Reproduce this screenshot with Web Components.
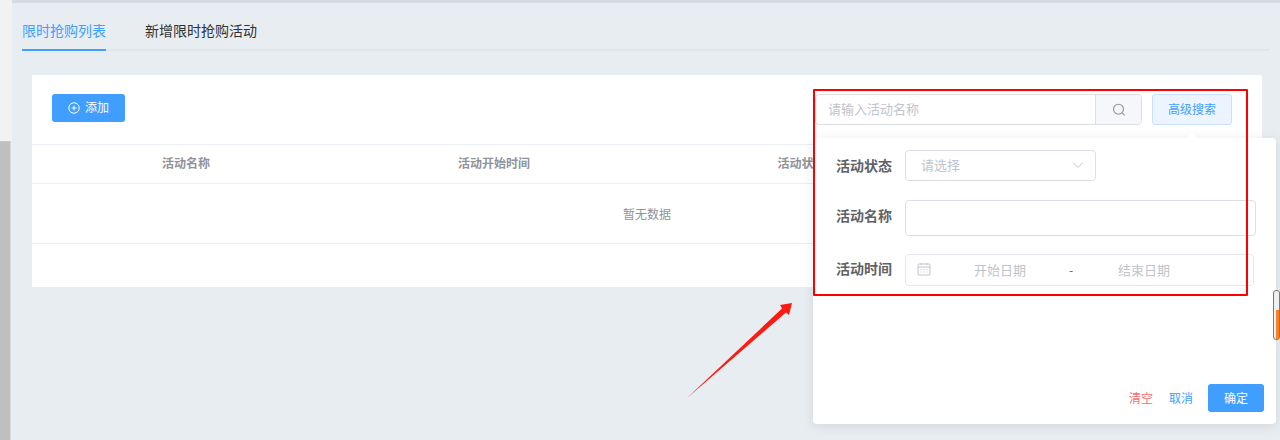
<!DOCTYPE html>
<html lang="zh"><head><meta charset="utf-8"><title>限时抢购</title>
<style>
html,body{margin:0;height:440px;overflow:hidden;background:#e8edf1;font-family:"Noto Sans CJK SC","Liberation Sans",sans-serif;color:#303133}
</style></head><body>
<app-shell>
  <tab-bar></tab-bar>
  <list-card>
    <flash-table></flash-table>
  </list-card>
</app-shell>
<script>
function def(name,html){customElements.define(name,class extends HTMLElement{constructor(){super();this.attachShadow({mode:'open'}).innerHTML=html;}});}
const chevron='<svg width="14" height="14" viewBox="0 0 14 14" fill="none" stroke="#c0c4cc" stroke-width="1" style="margin-top:1px"><path d="M2 4.5 7 9.5l5-5"/></svg>';
def('app-shell',`<style>
:host{display:flex;width:1280px;height:440px;position:relative;overflow:hidden}
.rail{width:12px;flex:none;display:flex;flex-direction:column}
.rail .a{height:141px;background:#f2f2f2}
.rail .b{flex:1;background:#bfbfbf;border-top:1px solid #c9c9c9;border-right:1px solid #d6d8da;margin-right:1px}
.main{flex:1;min-width:0;display:flex;flex-direction:column}
.top{height:3px;background:#d7dbe1;flex:none}
.body{padding:19px 18px 0 10px;display:flex;flex-direction:column}
</style>
<div class="rail"><div class="a"></div><div class="b"></div></div>
<div class="main"><div class="top"></div><div class="body"><slot></slot></div></div>
<adv-popover></adv-popover><red-notes></red-notes><mini-scroll></mini-scroll>`);
def('tab-bar',`<style>
:host{display:flex;gap:39px;height:29px;box-sizing:border-box;border-bottom:2px solid #e2e6eb;font-size:14px;line-height:17px;margin-right:-8px}
.t{height:29px;box-sizing:border-box;color:#303133}
.on{color:#409eff;border-bottom:2px solid #409eff;width:84px}
</style><div class="t on">限时抢购列表</div><div class="t">新增限时抢购活动</div>`);
def('list-card',`<style>
:host{display:block;background:#fff;margin:24px 0 0 10px;height:212px}
.bar{height:69px;box-sizing:border-box;padding:19px 20px 0;display:flex;align-items:flex-start;justify-content:space-between}
.add{width:73px;height:28px;box-sizing:border-box;padding-bottom:3px;background:#409eff;border-radius:3px;color:#fff;font-size:12px;display:flex;align-items:center;justify-content:center;gap:5px}
.add svg{margin-top:3px}
</style>
<div class="bar"><div class="add"><svg width="12" height="12" viewBox="0 0 12 12" fill="none" stroke="#fff" stroke-width="1"><circle cx="6" cy="6" r="5.2"/><path d="M6 3.5v5M3.5 6h5"/></svg>添加</div><search-bar></search-bar></div>
<slot></slot>`);
def('search-bar',`<style>
:host{display:flex;gap:10px;margin-right:10px}
.box{width:327px;height:31px;box-sizing:border-box;border:1px solid #dcdfe6;border-radius:4px;display:flex;font-size:13px;color:#c0c4cc;line-height:28px;overflow:hidden}
.ph{flex:1;padding-left:12px}
.ic{width:45px;background:#f5f7fa;border-left:1px solid #dcdfe6;display:flex;align-items:center;justify-content:center}
.adv{width:80px;height:31px;box-sizing:border-box;padding-bottom:2px;border:1px solid #c6e2ff;background:#ecf5ff;color:#409eff;border-radius:3px;font-size:12px;display:flex;align-items:center;justify-content:center}
</style>
<div class="box"><div class="ph">请输入活动名称</div><div class="ic"><svg width="14" height="14" viewBox="0 0 14 14" fill="none" stroke="#909399" stroke-width="1.1"><circle cx="6.5" cy="6.2" r="5"/><path d="M10.2 9.9 12.6 12.4"/></svg></div></div>
<div class="adv">高级搜索</div>`);
def('flash-table',`<style>
:host{display:block;font-size:12px;color:#909399}
.h{display:grid;grid-template-columns:308px 308px 307px 307px;height:40px;box-sizing:border-box;border-top:1px solid #ebeef5;border-bottom:1px solid #ebeef5;font-weight:700;line-height:36px;text-align:center}
.e{height:60px;box-sizing:border-box;border-bottom:1px solid #ebeef5;line-height:59px;text-align:center}
</style>
<div class="h"><div>活动名称</div><div>活动开始时间</div><div>活动状态</div><div></div></div>
<div class="e">暂无数据</div>`);
def('adv-popover',`<style>
:host{position:absolute;left:813px;top:138px;width:463px;height:286px;background:#fff;border-radius:4px;box-shadow:0 2px 12px rgba(0,0,0,.1);box-sizing:border-box;padding:12px 12px 12px 23px;display:flex;flex-direction:column;font-size:13px}
.arrow{position:absolute;left:374px;top:-5px;width:0;height:0;border:5px solid transparent;border-top:0;border-bottom:5px solid #fff}
.row{display:flex;align-items:center}
label{width:69px;flex:none;font-size:14px;font-weight:700;color:#606266}
.f{box-sizing:border-box;border:1px solid #dcdfe6;border-radius:4px;color:#c0c4cc;display:flex;align-items:center}
.sel{width:191px;height:31px;padding:0 10px 2px 15px;justify-content:space-between}
.inp{width:351px;height:36px}
.date{width:349px;height:32px;padding:0 0 2px 11px;border-color:#e4e7ed}
.date span{text-align:center;width:52px;font-size:13px;flex:none}
.date i{font-style:normal;color:#606266;font-size:12px;width:14px;text-align:center;flex:none}
.date svg{flex:none;margin-top:-1px}
.foot{margin-top:auto;display:flex;align-items:center;justify-content:flex-end;font-size:12px}
.clr{color:#f56c6c;margin:0 16px 2px 0}.can{color:#409eff;margin:0 15px 2px 0}
.ok{width:56px;height:28px;box-sizing:border-box;padding-bottom:2px;background:#409eff;color:#fff;border-radius:3px;display:flex;align-items:center;justify-content:center}
</style>
<div class="arrow"></div>
<div class="row"><label style="padding-bottom:2px">活动状态</label><div class="f sel">请选择${chevron}</div></div>
<div class="row" style="margin-top:19px"><label style="padding-bottom:6px">活动名称</label><div class="f inp"></div></div>
<div class="row" style="margin-top:18px"><label style="padding-bottom:4px">活动时间</label><div class="f date"><svg width="14" height="14" viewBox="0 0 14 14" fill="none" stroke="#c0c4cc" stroke-width="1"><rect x="1" y="2" width="12" height="11" rx="1"/><path d="M1 5h12M4 1v2M10 1v2M3.5 7.5h1M6.5 7.5h1M9.5 7.5h1M3.5 10h1M6.5 10h1M9.5 10h1"/></svg><span style="margin-left:43px">开始日期</span><i style="margin-left:38px">-</i><span style="margin-left:40px">结束日期</span></div></div>
<div class="foot"><span class="clr">清空</span><span class="can">取消</span><div class="ok">确定</div></div>`);
def('red-notes',`<style>
:host{position:absolute;inset:0;pointer-events:none;display:block}
.r{position:absolute;left:813px;top:89px;width:435px;height:207px;box-sizing:border-box;border:2px solid #ff0000;border-radius:1px}
svg{position:absolute;left:680px;top:295px}
</style><div class="r"></div>
<svg width="120" height="110" viewBox="0 0 120 110"><path d="M6.5 103.5 102 13.5 100 10 112 8 109 20 106 17.5 Z" fill="#fd1a12"/></svg>`);
def('mini-scroll',`<style>
:host{position:absolute;left:1273px;top:290px;width:7px;height:50px;box-sizing:border-box;border:1.5px solid #7a7a7a;border-radius:3px;background:#f0f0f0;display:flex;flex-direction:column;justify-content:flex-end}
div{height:29px;width:3px;margin-left:1.5px;background:#f5812a}
</style><div></div>`);
</script>
</body></html>
